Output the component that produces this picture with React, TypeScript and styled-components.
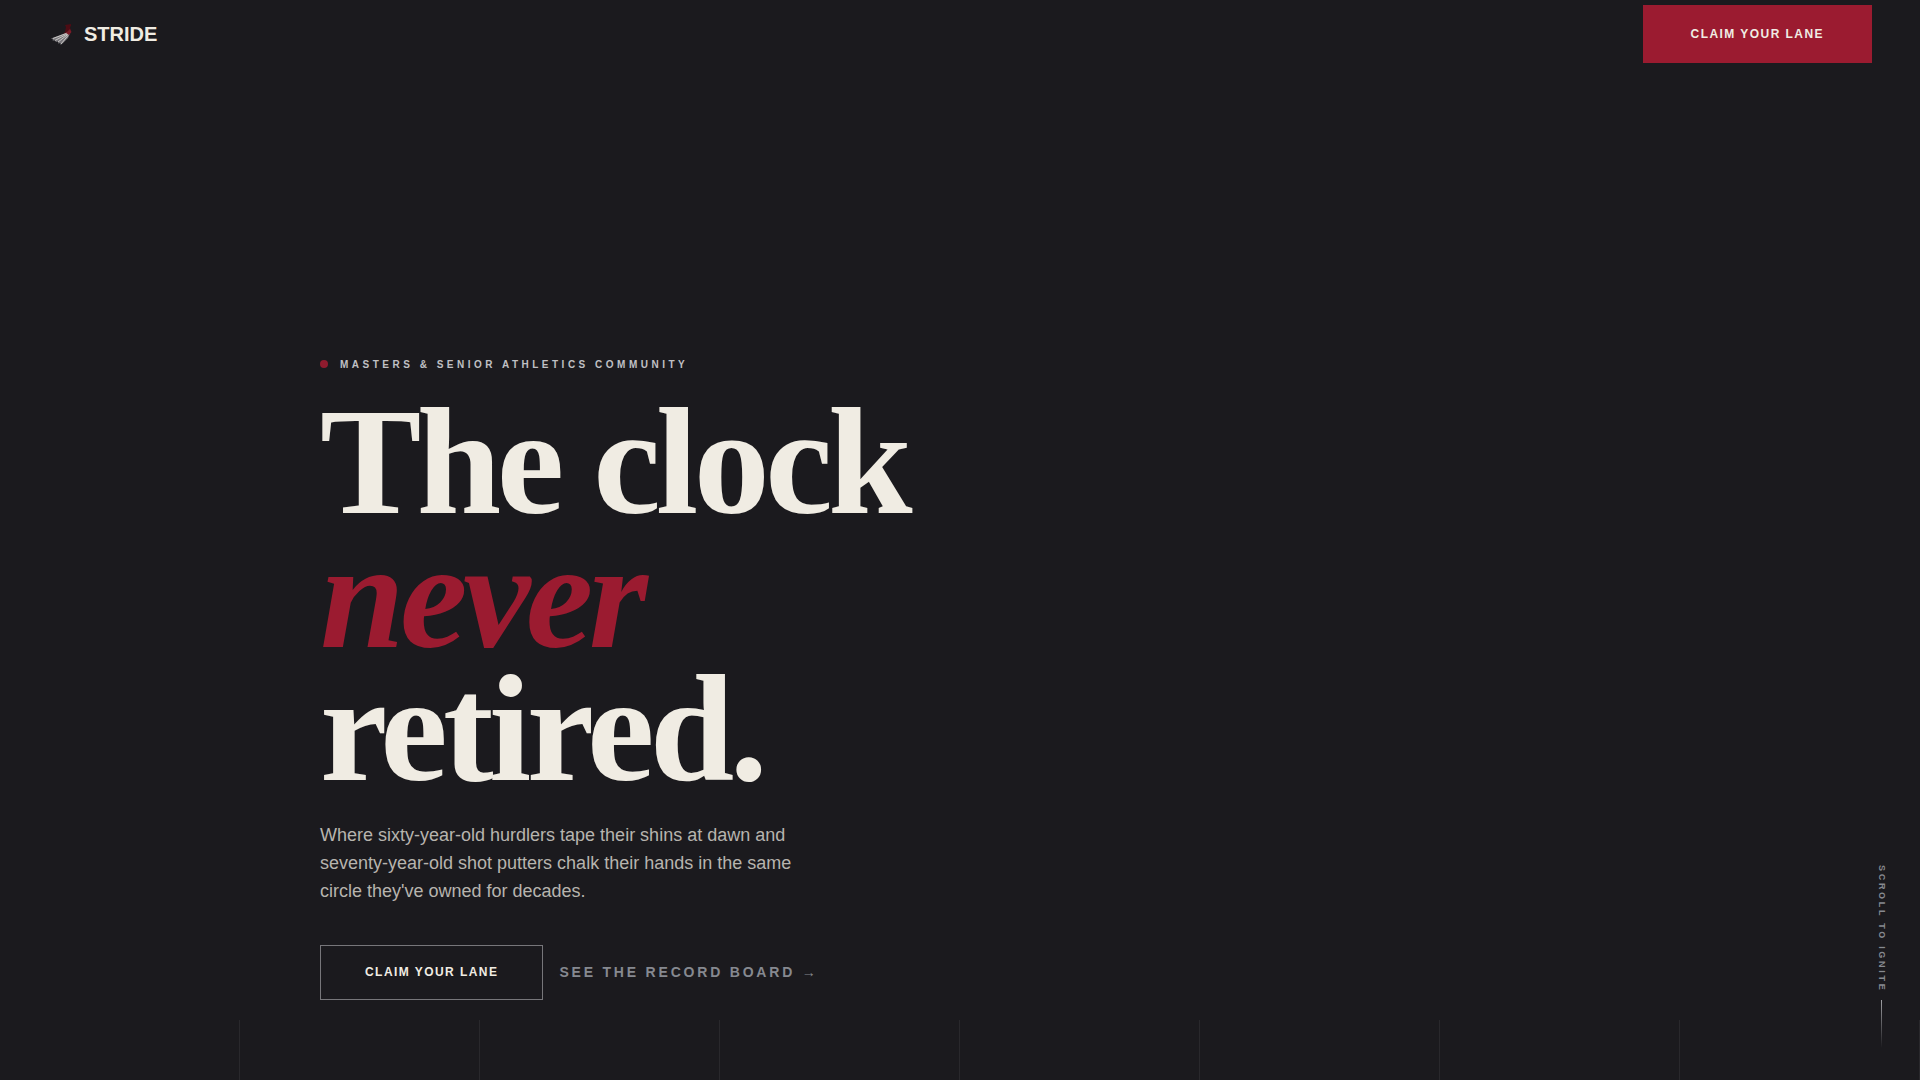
import React from "react";
import styled, { createGlobalStyle } from "styled-components";

const GlobalStyle = createGlobalStyle`
  *, *::before, *::after { box-sizing: border-box; }
  html, body { margin: 0; background: #1b1a1e; }
  body {
    color: #f0ece3;
    font-family: "Liberation Sans", Arial, sans-serif;
  }
`;

const Page = styled.div`
  position: relative;
  min-height: 100vh;
  display: flex;
  flex-direction: column;
  background: #1b1a1e;
`;

const Nav = styled.header`
  display: flex;
  align-items: center;
  justify-content: space-between;
  padding: 5px 48px;
`;

const Brand = styled.a`
  display: flex;
  align-items: center;
  gap: 8px;
  color: #f0ece3;
  font-size: 20px;
  font-weight: 700;
  text-decoration: none;
`;

const Button = styled.button<{ $outline?: boolean }>`
  padding: ${(p) => (p.$outline ? "20px 44px" : "22px 48px")};
  border: ${(p) => (p.$outline ? "1px solid #77767a" : "0")};
  border-radius: 0;
  background: ${(p) => (p.$outline ? "transparent" : "#9b1b30")};
  color: #f0ece3;
  font-family: inherit;
  font-size: 12px;
  font-weight: 700;
  line-height: ${(p) => (p.$outline ? "13px" : "14px")};
  letter-spacing: 0.12em;
  text-transform: uppercase;
  cursor: pointer;
`;

const Hero = styled.main`
  flex: 1;
  display: flex;
  flex-direction: column;
  justify-content: flex-end;
  width: 100%;
  max-width: 1280px;
  margin: 0 auto;
  padding-bottom: 20px;
`;

const Eyebrow = styled.p`
  display: flex;
  align-items: center;
  gap: 12px;
  margin: 0 0 24px;
  color: #c0c0c4;
  font-size: 10px;
  font-weight: 700;
  line-height: 15px;
  letter-spacing: 0.35em;
  text-transform: uppercase;

  &::before {
    content: "";
    width: 8px;
    height: 8px;
    border-radius: 50%;
    background: #8f1b2e;
  }
`;

const Title = styled.h1`
  margin: 0 0 24px;
  font-family: "Liberation Serif", "Times New Roman", serif;
  font-size: 152px;
  font-weight: 700;
  line-height: 0.88;
  letter-spacing: -0.03em;

  em { color: #9b1b30; font-style: italic; }
`;

const Lead = styled.p`
  max-width: 480px;
  margin: 0 0 40px;
  color: #b7b4ae;
  font-size: 18px;
  line-height: 28px;
`;

const Actions = styled.div`
  display: flex;
  align-items: center;
  gap: 16px;
`;

const TextLink = styled.a`
  color: #868990;
  font-size: 14px;
  font-weight: 700;
  line-height: 15px;
  letter-spacing: 0.2em;
  text-decoration: none;
  text-transform: uppercase;
`;

const Lanes = styled.div`
  display: grid;
  grid-template-columns: repeat(8, 1fr);
  height: 60px;
`;

const Lane = styled.div`
  border-right: 1px solid #29282c;
`;

const ScrollHint = styled.div`
  position: absolute;
  right: 32px;
  bottom: 32px;
  display: flex;
  flex-direction: column;
  align-items: center;
  gap: 8px;
  color: #868990;
  font-size: 9px;
  font-weight: 700;
  line-height: 13px;
  letter-spacing: 0.3em;
  text-transform: uppercase;

  span { writing-mode: vertical-rl; }

  &::after {
    content: "";
    width: 1px;
    height: 48px;
    background: linear-gradient(to bottom, #a0a0a4, transparent);
  }
`;

const WingMark = () => (
  <svg width="28" height="28" viewBox="0 0 28 28" aria-hidden="true">
    <path d="M17 5l6-1v2l-1 1 1 5-5 2-4 1 3-3 1-5z" fill="#4d0c14" />
    <path d="M23 11 3 18.500 5 19.500 4.500 20.500 8 20.500 7.500 22 10.500 21.500 10 23.500 12.500 23 12.500 25 15 23 20 18z" fill="#77757a" />
    <path d="M21 12.500 5 18.500M21 13 7 20.500M20.500 14 10 22M20 15.500 13 24" fill="none" stroke="#c9c6c4" strokeWidth="1" />
    <path d="M18 13l4-4 1.500 3-2.500 3z" fill="#7a1a27" />
  </svg>
);

export default function App() {
  return (
    <>
      <GlobalStyle />
      <Page>
        <Nav>
          <Brand href="#">
            <WingMark />
            STRIDE
          </Brand>
          <Button type="button">Claim your lane</Button>
        </Nav>
        <Hero>
          <Eyebrow>Masters &amp; Senior Athletics Community</Eyebrow>
          <Title>
            The clock<br />
            <em>never</em><br />
            retired.
          </Title>
          <Lead>
            Where sixty-year-old hurdlers tape their shins at dawn and seventy-year-old shot
            putters chalk their hands in the same circle they've owned for decades.
          </Lead>
          <Actions>
            <Button type="button" $outline>Claim your lane</Button>
            <TextLink href="#records">See the record board →</TextLink>
          </Actions>
        </Hero>
        <Lanes aria-hidden="true">
          {Array.from({ length: 8 }, (_, i) => <Lane key={i} />)}
        </Lanes>
        <ScrollHint><span>Scroll to ignite</span></ScrollHint>
      </Page>
    </>
  );
}
